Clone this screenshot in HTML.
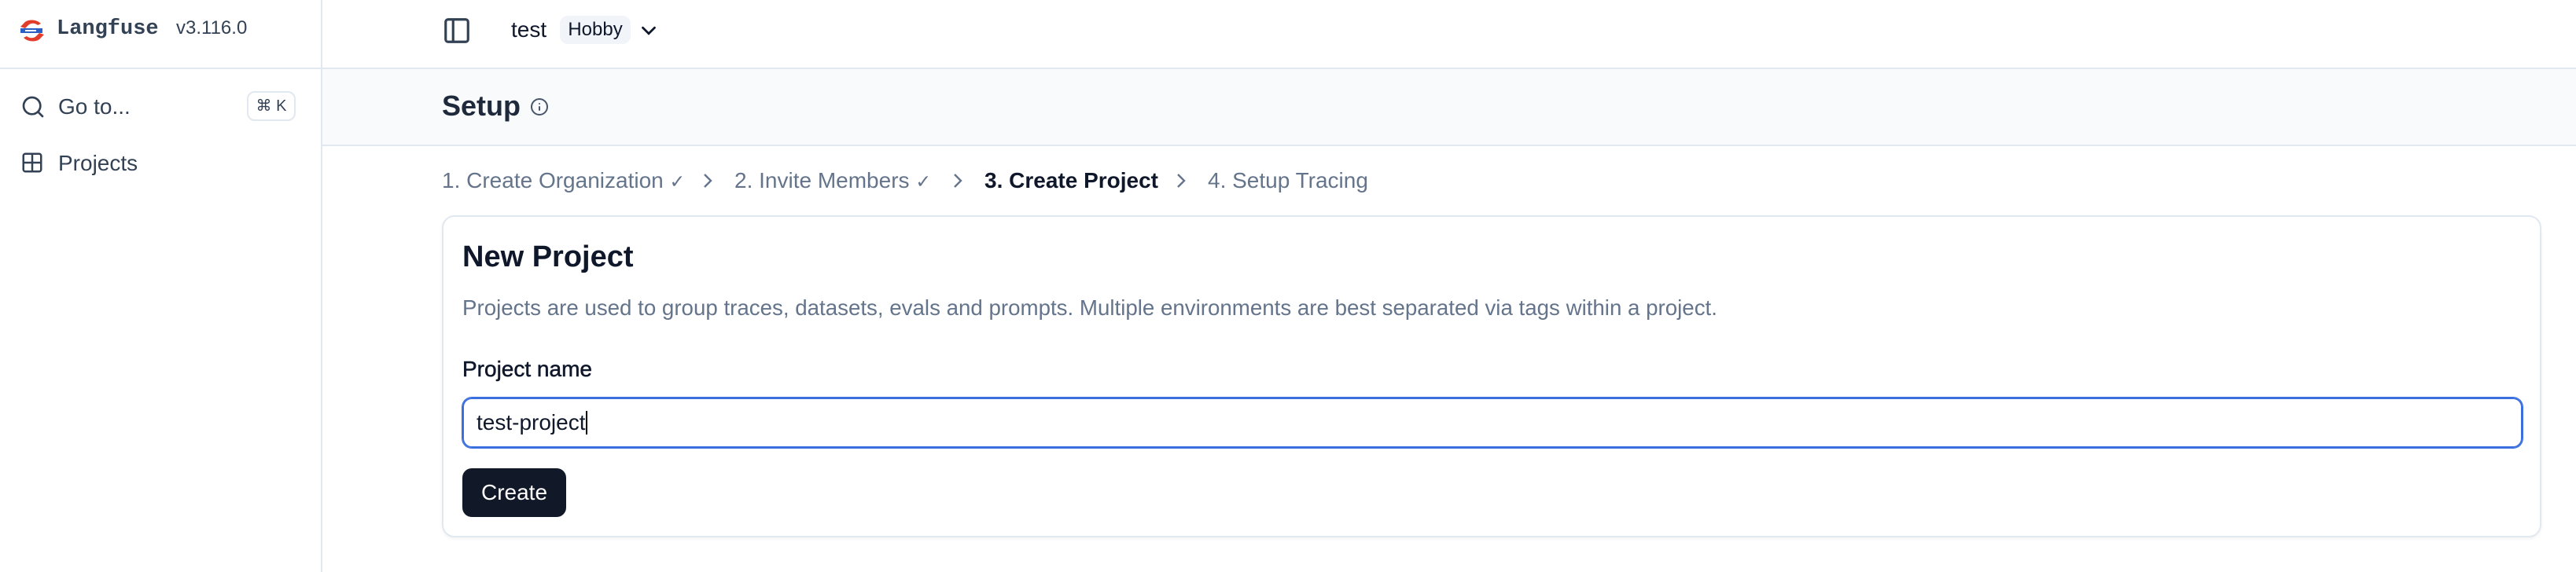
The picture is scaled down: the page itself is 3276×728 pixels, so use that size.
<!DOCTYPE html>
<html><head><meta charset="utf-8"><style>
html{zoom:2}
*{box-sizing:border-box;margin:0;padding:0}
body{width:1638px;height:364px;background:#fff;font-family:"Liberation Sans",sans-serif;color:#0f172a;position:relative;overflow:hidden}
.abs{position:absolute}
.side{left:0;top:0;width:205px;height:364px;border-right:1px solid #e2e8f0}
.hline{left:0;top:43px;width:1638px;height:1px;background:#e2e8f0}
.band{left:205px;top:44px;width:1433px;height:49px;background:#f8fafc;border-bottom:1px solid #e2e8f0}
.steps span{position:absolute;top:107px;font-size:14px;color:#64748b;white-space:nowrap}
.chev{position:absolute;top:109px}
</style></head><body>
<div class="abs side"></div>
<div class="abs hline"></div>
<div class="abs band"></div>
<svg class="abs" style="left:12px;top:12px" width="17" height="15" viewBox="0 0 17 15"><path d="M14 3C11 0 5 0 3 3L1 5 4 6 6 4C8 2 11 3 12 4Z" fill="#e23c2a"/><path d="M3 12C6 15 12 15 14 12L16 10 13 9 11 11C9 13 6 12 5 11Z" fill="#e23c2a"/><path d="M1 6H15V9H1Z" fill="#2c5fc4"/><path d="M4 7.5H11" stroke="#fff" stroke-width="1"/></svg>
<div class="abs" style="left:36px;top:11px;font-family:'Liberation Mono',monospace;font-weight:bold;font-size:13.5px;color:#334155">Langfuse</div>
<div class="abs" style="left:112px;top:11px;font-size:12px;color:#334155">v3.116.0</div>
<svg class="abs" style="left:13px;top:60px" width="16" height="16" viewBox="0 0 24 24" fill="none" stroke="#334155" stroke-width="2" stroke-linecap="round"><circle cx="11" cy="11" r="8"/><path d="M21 21l-4.3-4.3"/></svg>
<div class="abs" style="left:37px;top:60px;font-size:14px;color:#334155">Go to...</div>
<div class="abs" style="left:157px;top:58px;width:31px;height:19px;border:1px solid #e2e8f0;border-radius:5px;font-size:10px;line-height:17px;text-align:center;color:#334155">⌘ K</div>
<svg class="abs" style="left:13px;top:96px" width="15" height="15" viewBox="0 0 24 24" fill="none" stroke="#334155" stroke-width="2"><rect x="3" y="3" width="18" height="18" rx="2"/><path d="M12 3v18M3 12h18"/></svg>
<div class="abs" style="left:37px;top:96px;font-size:14px;color:#334155">Projects</div>
<svg class="abs" style="left:281px;top:10px" width="19" height="19" viewBox="0 0 24 24" fill="none" stroke="#334155" stroke-width="2"><rect x="3" y="3" width="18" height="18" rx="2"/><path d="M9 3v18"/></svg>
<div class="abs" style="left:325px;top:11px;font-size:14px;color:#0f172a">test</div>
<div class="abs" style="left:356px;top:10px;width:45px;height:18px;background:#f1f5f9;border-radius:5px;font-size:12px;line-height:18px;text-align:center;color:#0f172a">Hobby</div>
<svg class="abs" style="left:405px;top:12px" width="15" height="15" viewBox="0 0 24 24" fill="none" stroke="#0f172a" stroke-width="2.2" stroke-linecap="round"><path d="M6 9l6 6 6-6"/></svg>
<div class="abs" style="left:281px;top:57px;font-size:18px;font-weight:bold;color:#1e293b">Setup</div>
<svg class="abs" style="left:337px;top:62px" width="12" height="12" viewBox="0 0 24 24" fill="none" stroke="#475569" stroke-width="2" stroke-linecap="round"><circle cx="12" cy="12" r="10"/><path d="M12 16v-4M12 8h0"/></svg>
<div class="steps">
<span style="left:281px">1. Create Organization <small>✓</small></span>
<span style="left:467px">2. Invite Members <small>✓</small></span>
<span style="left:626px;color:#0f172a;font-weight:bold">3. Create Project</span>
<span style="left:768px">4. Setup Tracing</span>
</div>
<svg class="chev" style="left:445px" width="10" height="12" viewBox="0 0 10 12" fill="none" stroke="#64748b" stroke-width="1.2"><path d="M3 2l4 4-4 4"/></svg>
<svg class="chev" style="left:604px" width="10" height="12" viewBox="0 0 10 12" fill="none" stroke="#64748b" stroke-width="1.2"><path d="M3 2l4 4-4 4"/></svg>
<svg class="chev" style="left:746px" width="10" height="12" viewBox="0 0 10 12" fill="none" stroke="#64748b" stroke-width="1.2"><path d="M3 2l4 4-4 4"/></svg>
<div class="abs" style="left:281px;top:137px;width:1335px;height:205px;border:1px solid #e2e8f0;border-radius:8px;box-shadow:0 1px 2px rgba(0,0,0,.05)"></div>
<div class="abs" style="left:294px;top:153px;font-size:19px;font-weight:bold;color:#0f172a">New Project</div>
<div class="abs" style="left:294px;top:188px;font-size:13.85px;color:#64748b;white-space:nowrap">Projects are used to group traces, datasets, evals and prompts. Multiple environments are best separated via tags within a project.</div>
<div class="abs" style="left:294px;top:227px;font-size:14px;color:#0f172a;-webkit-text-stroke:.25px #0f172a">Project name</div>
<div class="abs" style="left:294px;top:253px;width:1310px;height:32px;border:1px solid #3b6fe0;box-shadow:0 0 0 .5px #3b6fe0;border-radius:6px;font-size:14px;line-height:30px;padding-left:8px;color:#0f172a">test-project<span style="display:inline-block;width:1px;height:15px;background:#000;vertical-align:-3px"></span></div>
<div class="abs" style="left:294px;top:298px;width:66px;height:31px;background:#111827;border-radius:6px;color:#fff;font-size:14px;line-height:31px;text-align:center">Create</div>
</body></html>
